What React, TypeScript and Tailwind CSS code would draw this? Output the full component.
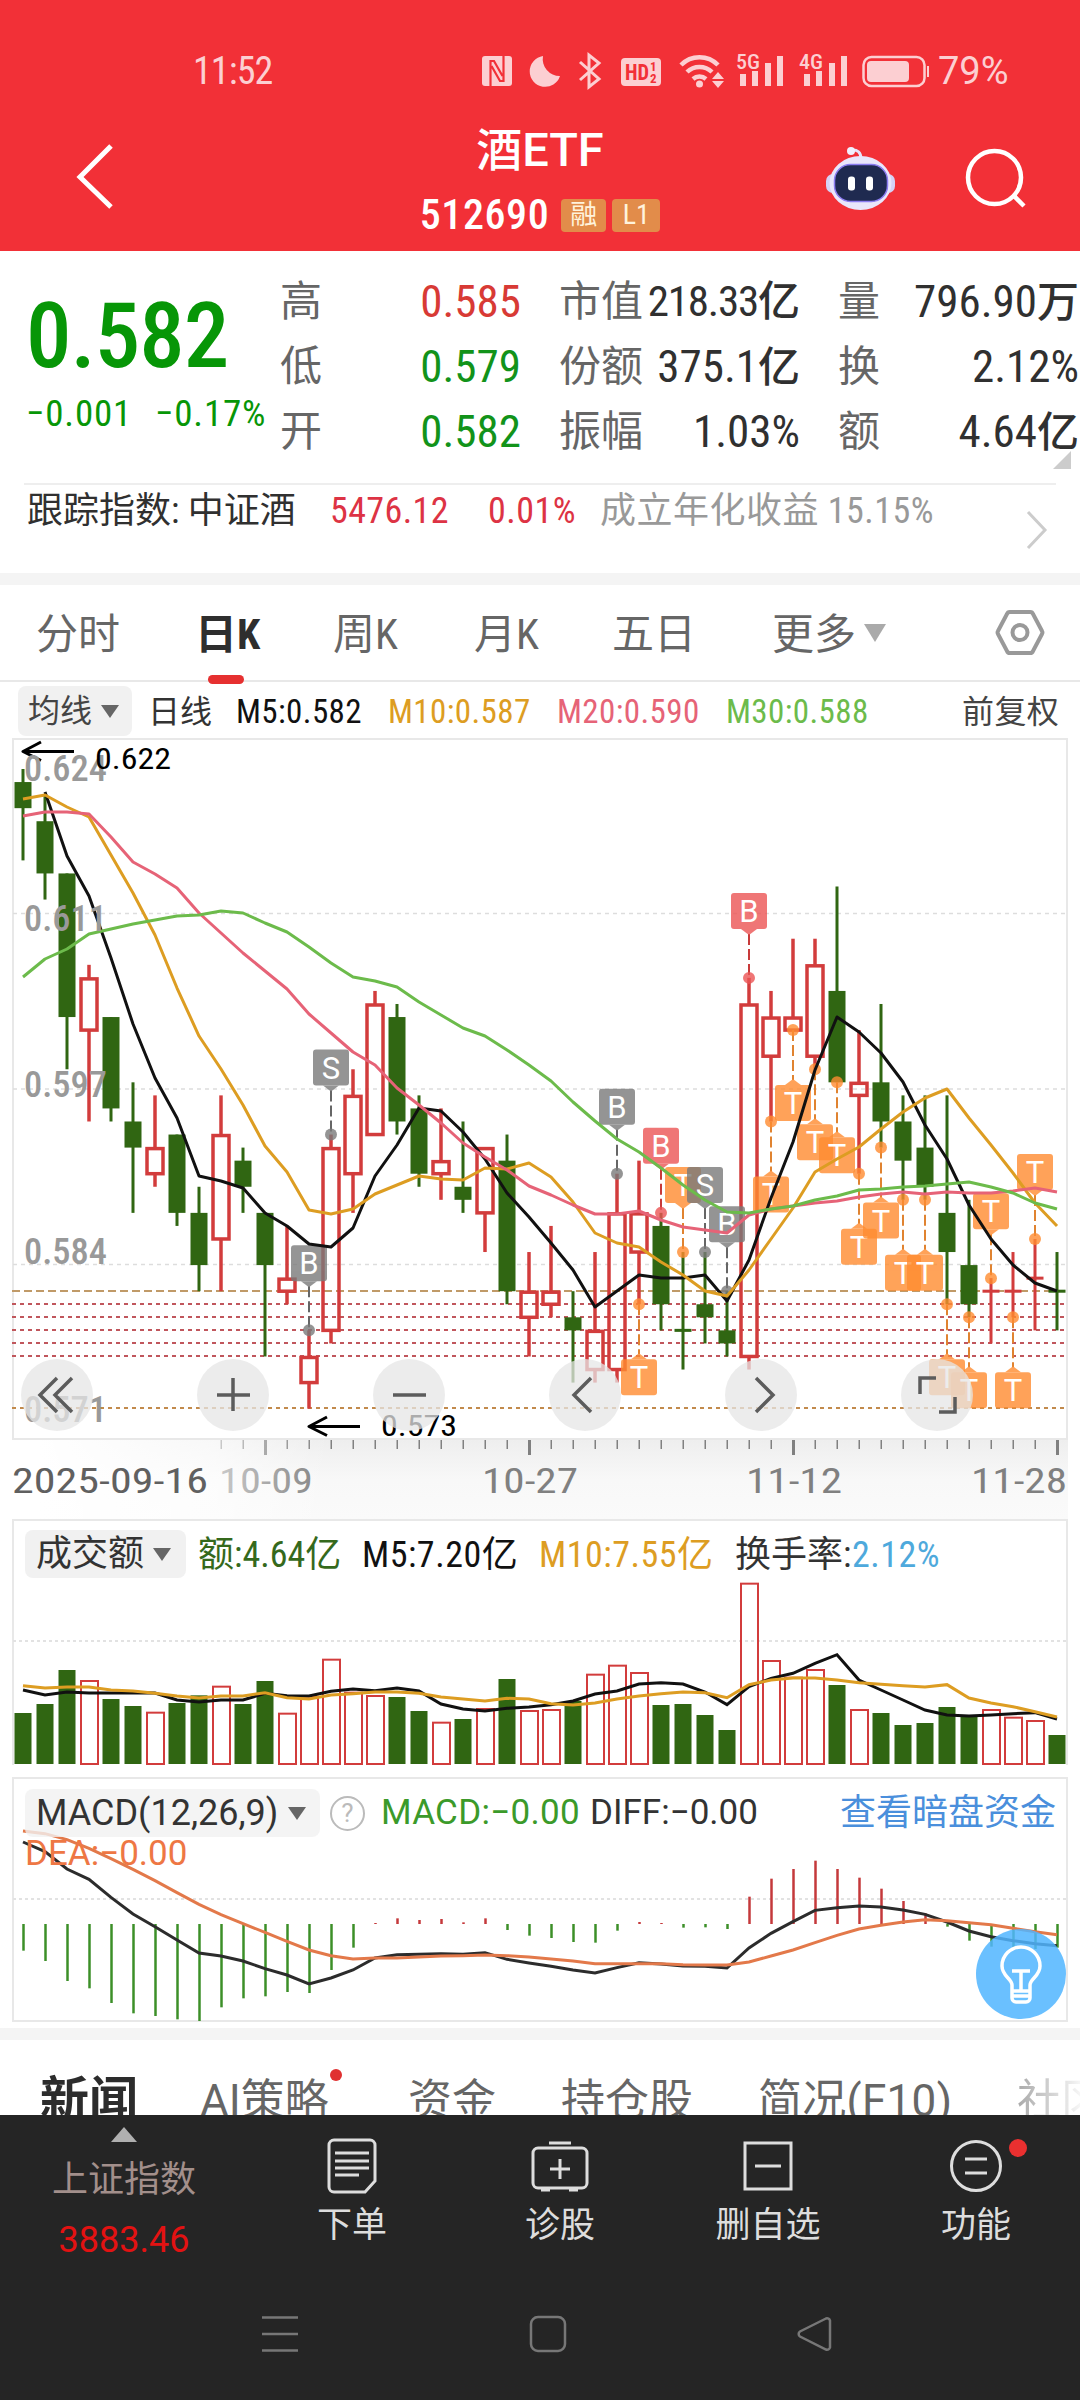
import type { ReactNode } from 'react';

// [kind, high, top, bottom, low] in ticks of 0.001 below 0.622
type Candle = [string, number, number, number, number];

const candles: Candle[] = [
  ['g', 0, 1, 3, 7], ['g', 2, 4, 8, 10], ['g', 8, 8, 19, 23], ['r', 15, 16, 20, 27],
  ['g', 19, 19, 26, 27], ['g', 24, 27, 29, 34], ['r', 25, 29, 31, 32], ['g', 28, 28, 34, 35],
  ['g', 32, 34, 38, 40], ['r', 25, 28, 36, 40], ['g', 29, 30, 32, 34], ['g', 34, 34, 38, 45],
  ['r', 35, 39, 40, 41], ['r', 43, 45, 47, 49], ['r', 28, 29, 43, 44], ['r', 23, 25, 31, 34],
  ['r', 17, 18, 28, 28], ['g', 18, 19, 27, 28], ['g', 25, 26, 31, 32], ['r', 26, 30, 31, 33],
  ['g', 27, 32, 33, 34], ['r', 29, 29, 34, 37], ['g', 28, 30, 40, 41], ['r', 37, 40, 42, 45],
  ['r', 35, 40, 41, 42], ['g', 40, 42, 43, 47], ['r', 37, 43, 46, 47], ['r', 31, 34, 46, 47],
  ['r', 30, 34, 37, 41], ['g', 34, 35, 41, 43], ['g', 37, 43, 43, 46], ['g', 37, 41, 42, 44],
  ['g', 40, 43, 44, 45], ['r', 16, 18, 45, 46], ['r', 17, 19, 22, 27], ['r', 13, 19, 20, 20],
  ['r', 13, 15, 22, 23], ['g', 9, 17, 24, 24], ['r', 20, 24, 25, 31], ['g', 18, 24, 27, 29],
  ['g', 25, 27, 30, 33], ['g', 25, 29, 32, 33], ['g', 25, 34, 37, 41], ['g', 33, 38, 41, 42],
  ['r', 39, 40, 40, 44], ['r', 37, 40, 40, 42], ['r', 36, 39, 39, 43], ['g', 37, 40, 40, 43],
];

const ma5 = [792, 856, 896, 958, 1024, 1078, 1118, 1176, 1181, 1188, 1213, 1226, 1244, 1247, 1228, 1176, 1145, 1108, 1111, 1132, 1159, 1193, 1217, 1243, 1270, 1307, 1291, 1275, 1278, 1278, 1275, 1301, 1260, 1198, 1142, 1070, 1017, 1032, 1053, 1082, 1125, 1159, 1205, 1239, 1265, 1283, 1291];
const ma10 = [799, 795, 807, 817, 855, 893, 935, 988, 1036, 1069, 1105, 1146, 1172, 1210, 1214, 1209, 1194, 1185, 1176, 1179, 1180, 1168, 1169, 1163, 1177, 1202, 1233, 1243, 1247, 1262, 1275, 1291, 1296, 1270, 1239, 1208, 1172, 1159, 1147, 1129, 1112, 1098, 1089, 1118, 1145, 1173, 1203, 1226];
const ma20 = [816, 812, 812, 814, 837, 862, 874, 888, 913, 933, 953, 971, 989, 1014, 1033, 1052, 1065, 1088, 1105, 1123, 1143, 1157, 1170, 1186, 1195, 1205, 1214, 1214, 1211, 1220, 1227, 1230, 1233, 1215, 1209, 1206, 1203, 1201, 1197, 1194, 1192, 1194, 1192, 1193, 1193, 1191, 1188, 1192];
const ma30 = [977, 959, 949, 934, 929, 924, 920, 916, 915, 911, 913, 923, 932, 947, 963, 977, 981, 987, 1002, 1015, 1028, 1036, 1050, 1065, 1081, 1102, 1121, 1139, 1152, 1168, 1185, 1200, 1212, 1213, 1209, 1206, 1200, 1196, 1190, 1189, 1187, 1186, 1184, 1182, 1187, 1193, 1203, 1209];

// [label, colour, candle index, tick, above?]
const markers: [string, string, number, number, boolean][] = [
  ['S', 'gray', 14, 28, true], ['B', 'gray', 13, 43, true], ['B', 'gray', 27, 31, true],
  ['T', 'orange', 28, 41, false], ['B', 'red', 29, 34, true], ['T', 'orange', 30, 37, true],
  ['S', 'gray', 31, 37, true], ['B', 'gray', 32, 40, true], ['B', 'red', 33, 16, true],
  ['T', 'orange', 34, 27, false], ['T', 'orange', 35, 20, false], ['T', 'orange', 36, 23, false],
  ['T', 'orange', 37, 24, false], ['T', 'orange', 38, 31, false], ['T', 'orange', 39, 29, false],
  ['T', 'orange', 40, 33, false], ['T', 'orange', 41, 33, false], ['T', 'orange', 42, 41, false],
  ['T', 'orange', 43, 42, false], ['T', 'orange', 44, 39, true], ['T', 'orange', 45, 42, false],
  ['T', 'orange', 46, 36, true],
];
const markerFill: Record<string, string> = { gray: '#7a7a7a', red: '#ec5454', orange: '#ff8c30' };
const markerLine: Record<string, string> = { gray: '#666', red: '#c83a3a', orange: '#e08330' };

// heights in thirds of a pixel, measured down from each panel's origin
const volume = [609, 582, 480, 510, 567, 588, 605, 579, 556, 527, 582, 513, 608, 557, 446, 545, 555, 561, 603, 635, 627, 594, 507, 600, 597, 573, 491, 464, 486, 585, 582, 615, 660, 218, 450, 500, 477, 525, 597, 609, 645, 639, 591, 621, 597, 620, 630, 675];
const volume5 = [540, 555, 546, 549, 549, 548, 549, 570, 576, 570, 570, 550, 557, 558, 544, 537, 542, 534, 543, 582, 597, 603, 595, 591, 584, 573, 552, 543, 522, 518, 522, 546, 584, 530, 505, 490, 460, 434, 510, 540, 570, 600, 615, 618, 615, 611, 608, 627];
const volume10 = [527, 534, 531, 531, 540, 543, 550, 558, 564, 558, 558, 548, 563, 567, 555, 551, 546, 546, 550, 561, 567, 573, 565, 567, 581, 585, 579, 567, 558, 551, 546, 548, 563, 524, 510, 504, 504, 510, 518, 523, 527, 531, 524, 564, 579, 590, 605, 621];
const macd = [542, 573, 633, 655, 699, 730, 738, 748, 753, 712, 685, 679, 666, 669, 600, 533, 459, 445, 450, 447, 457, 445, 480, 497, 504, 516, 518, 482, 456, 459, 473, 472, 477, 380, 326, 297, 272, 297, 323, 356, 393, 430, 470, 512, 530, 535, 537, 533];
const diff = [216, 245, 297, 328, 382, 432, 470, 510, 549, 558, 573, 596, 615, 642, 624, 600, 564, 554, 553, 551, 553, 548, 568, 579, 589, 600, 609, 593, 578, 582, 588, 589, 594, 534, 490, 455, 421, 413, 408, 411, 420, 433, 456, 483, 500, 512, 521, 527];
const dea = [183, 191, 209, 235, 266, 298, 332, 368, 403, 434, 461, 487, 514, 540, 557, 567, 564, 564, 561, 558, 557, 555, 557, 561, 567, 573, 581, 581, 581, 581, 584, 585, 585, 576, 558, 540, 518, 496, 477, 466, 456, 449, 452, 458, 464, 475, 485, 494];

const RED = '#d23c3c';
const GREEN = '#306612';

const xAt = (i: number) => 23 + 22 * i;
const yAt = (tick: number) => 769 + 13.055 * tick;
const line = (ys: number[], start = 0) => ys.map((y, i) => `${xAt(i + start)},${y}`).join(' ');
const thirds = (ys: number[], origin: number) => ys.map(v => origin + v / 3);

function ChartText({ x, y, w, size, fill, weight = 400, children }: { x: number; y: number; w: number; size: number; fill: string; weight?: number; children: string }) {
  return (
    <text x={x} y={y} fontSize={size} fill={fill} fontWeight={weight} textLength={w} lengthAdjust="spacingAndGlyphs">
      {children}
    </text>
  );
}

function StatusBar() {
  return (
    <div className="flex h-[112px] items-end pb-[20px] pl-[193px] text-[#fccfd2]">
      <span className="w-[289px] text-[38px] leading-[42px] tracking-[-0.9px]">11:52</span>
      <svg width="452" height="42" viewBox="482 50 452 42" fill="#fccfd2">
        <rect x="482" y="56" width="30" height="30" rx="3" />
        <path d="M490.500 86V61h3.500l8.500 15M503.500 56v25h-3.500L491.500 66" fill="none" stroke="#f23037" strokeWidth="2.200" />
        <path d="M543 56a17 17 0 0 0 17 20a15.500 15.500 0 1 1-17-20z" />
        <path d="M580 62l19 17-10 8V55l10 8-19 17" fill="none" stroke="#fccfd2" strokeWidth="3" />
        <rect x="621" y="58" width="40" height="28" rx="4" />
        <g fill="#f23037" fontWeight="700">
          <text x="625" y="80" fontSize="22" textLength="24" lengthAdjust="spacingAndGlyphs">HD</text>
          <text x="650" y="71" fontSize="13">1</text>
          <text x="650" y="83" fontSize="13">2</text>
        </g>
        <g fill="none" stroke="#fccfd2" strokeWidth="4.500">
          <path d="M681 65a26 26 0 0 1 37 0" />
          <path d="M687 72a18 18 0 0 1 25 0" />
          <path d="M693 79a10 10 0 0 1 13 0" />
        </g>
        <circle cx="699.500" cy="84" r="3.500" />
        <path d="M712 79l6-7 6 7zM712 81l6 7 6-7z" />
        <text x="736" y="69" fontSize="21" fontWeight="500" textLength="24" lengthAdjust="spacingAndGlyphs">5G</text>
        <path d="M740 74h6v12h-6zM752 71h6v15h-6zM765 63h6v23h-6zM777 56h6v30h-6z" />
        <text x="799" y="69" fontSize="21" fontWeight="500" textLength="24" lengthAdjust="spacingAndGlyphs">4G</text>
        <path d="M804 74h6v12h-6zM816 71h6v15h-6zM829 63h6v23h-6zM841 56h6v30h-6z" />
        <rect x="863.500" y="57" width="61" height="29" rx="8" fill="none" stroke="#fccfd2" strokeWidth="2.500" />
        <rect x="867" y="61" width="42" height="21" rx="4" />
        <path d="M927 66h2v11h-2z" />
      </svg>
      <span className="ml-[4px] text-[38px] leading-[42px] [font-stretch:100%]">79%</span>
    </div>
  );
}

function TitleBar() {
  return (
    <div className="flex h-[139px] text-white">
      <div className="w-[300px] pt-[31px] pl-[74px]">
        <svg width="42" height="68" viewBox="74 143 42 68" fill="none" stroke="#fff" strokeWidth="5">
          <path d="M111 146L80 177l31 30" />
        </svg>
      </div>
      <div className="flex w-[480px] flex-col items-center">
        <div className="mt-[10px] text-[46px] leading-[56px] font-medium">酒<span className="text-[47px] [font-stretch:100%]">ETF</span></div>
        <div className="mt-[15px] flex items-center gap-[6px]">
          <span className="mr-[6px] text-[42px] leading-[44px] font-medium tracking-[0.6px]">512690</span>
          <span className="flex h-[33px] w-[45px] items-center justify-center rounded bg-[#e28c4a] text-[27px] text-[#fff3dc]">融</span>
          <span className="flex h-[33px] w-[48px] items-center justify-center rounded bg-[#e28c4a] text-[28px] text-[#fff3dc]">L1</span>
        </div>
      </div>
      <div className="flex pt-[32px] pl-[44px]">
        <svg width="74" height="70" viewBox="824 144 74 70">
          <path d="M851 150q10-1 10 9" fill="none" stroke="#e6e4fb" strokeWidth="3" />
          <circle cx="851" cy="151" r="4" fill="#f1effd" />
          <rect x="826" y="174" width="69" height="19" rx="7" fill="#d5d2f6" />
          <ellipse cx="860.500" cy="183" rx="31" ry="27" fill="#e9e6fb" />
          <rect x="834.500" y="164.500" width="53" height="37" rx="16" fill="#1f2a50" stroke="#8b7cf0" strokeWidth="1.500" />
          <rect x="848" y="176.500" width="7" height="14" rx="3" fill="#fff" />
          <rect x="866" y="176.500" width="7" height="14" rx="3" fill="#fff" />
        </svg>
        <svg className="ml-[66px]" width="68" height="70" viewBox="964 144 68 70" fill="none" stroke="#fff" strokeWidth="4.500">
          <circle cx="994.500" cy="177.500" r="26.500" />
          <path d="M1013 195l11 11" />
        </svg>
      </div>
    </div>
  );
}

function Stat({ label, value, unit, className = '' }: { label: string; value: string; unit?: string; className?: string }) {
  return (
    <div className="flex h-[65px] items-center justify-between whitespace-nowrap">
      <span className="text-[42px] text-[#666]">{label}</span>
      <span className={`text-[45px] font-[450] ${className}`}>
        {value}
        {unit && <span className="text-[42px] tracking-normal">{unit}</span>}
      </span>
    </div>
  );
}

function Quote() {
  return (
    <section className="h-[322px]">
      <div className="flex h-[232px] pt-[18px] text-[#303030]">
        <div className="w-[280px] shrink-0 pl-[26px] text-[#079607]">
          <div className="mt-[17px] text-[91px] leading-[100px] font-medium tracking-[-1px]">0.582</div>
          <div className="mt-[8px] flex text-[37px] leading-[40px] tracking-[0.8px]">
            <span className="w-[129px]">−0.001</span>
            <span>−0.17%</span>
          </div>
        </div>
        <div className="w-[241px] shrink-0">
          <Stat label="高" value="0.585" className="text-[#d83a35]" />
          <Stat label="低" value="0.579" className="text-[#12931a]" />
          <Stat label="开" value="0.582" className="text-[#12931a]" />
        </div>
        <div className="ml-[38px] w-[241px] shrink-0">
          <Stat label="市值" value="218.33" unit="亿" className="text-[43px]! tracking-[-1.2px]" />
          <Stat label="份额" value="375.1" unit="亿" />
          <Stat label="振幅" value="1.03%" />
        </div>
        <div className="relative ml-[38px] w-[241px] shrink-0">
          <Stat label="量" value="796.90" unit="万" />
          <Stat label="换" value="2.12%" />
          <Stat label="额" value="4.64" unit="亿" />
          <svg className="absolute top-[182px] right-[8px]" width="18" height="18"><path d="M18 0v18H0z" fill="#ccc" /></svg>
        </div>
      </div>
      <div className="mx-[24px] flex h-[90px] border-t-2 border-[#eee] pl-[3px] text-[36px] leading-[52px] whitespace-nowrap">
        <span className="w-[303px] shrink-0 text-[#303030]">跟踪指数: 中证酒</span>
        <span className="w-[158px] shrink-0 font-[450] tracking-[0.4px] text-[#dd3344]">5476.12</span>
        <span className="w-[112px] shrink-0 font-[450] tracking-[0.5px] text-[#dd3344]">0.01%</span>
        <span className="w-[425px] shrink-0 tracking-[0.5px] text-[#999]">成立年化收益 15.15%</span>
        <svg className="mt-[25px]" width="24" height="40" fill="none" stroke="#ccc" strokeWidth="3"><path d="M3 2l17 18L3 38" /></svg>
      </div>
    </section>
  );
}

function PeriodTabs() {
  return (
    <nav className="flex h-[97px] items-start border-b-2 border-[#e8e8e8] pt-[19px] pl-[36px] text-[42px] leading-[62px] text-[#666]">
      <span className="w-[159px]">分时</span>
      <span className="relative w-[138px] font-bold text-[#2e2e2e]">
        日K
        <i className="absolute top-[71px] left-[13px] h-[9px] w-[36px] rounded-full bg-[#e63030]" />
      </span>
      <span className="w-[141px]">周K</span>
      <span className="w-[138px]">月K</span>
      <span className="w-[160px]">五日</span>
      <span className="w-[92px]">更多</span>
      <svg className="mt-[20px]" width="22" height="18"><path d="M0 0h22L11 18z" fill="#aaa" /></svg>
      <svg className="mt-[4px] ml-[109px]" width="50" height="50" viewBox="995 608 50 50" fill="none" stroke="#999" strokeWidth="4">
        <path d="M1010 612h20a3 3 0 0 1 3 2l9 17a3 3 0 0 1 0 3l-9 17a3 3 0 0 1-3 2h-20a3 3 0 0 1-3-2l-9-17a3 3 0 0 1 0-3l9-17a3 3 0 0 1 3-2z" />
        <circle cx="1020" cy="632.500" r="7.500" />
      </svg>
    </nav>
  );
}

function Caret() {
  return <svg width="18" height="13"><path d="M0 0h18L9 13z" fill="#666" /></svg>;
}

function AverageRow() {
  return (
    <div className="flex h-[56px] items-start pt-[4px] pl-[18px] text-[33px] leading-[52px] tracking-[0.4px]">
      <span className="flex h-[50px] w-[114px] items-center gap-[9px] rounded-lg bg-[#f1f1f1] pl-[10px] text-[32px] tracking-normal text-[#444]">均线<Caret /></span>
      <span className="ml-[16px] w-[88px] text-[32px] tracking-normal text-[#333]">日线</span>
      <span className="w-[152px] font-[450] text-[#111]">M5:0.582</span>
      <span className="w-[169px] font-[450] text-[#dd9d22]">M10:0.587</span>
      <span className="w-[169px] font-[450] text-[#e66377]">M20:0.590</span>
      <span className="w-[236px] font-[450] text-[#6cbb4b]">M30:0.588</span>
      <span className="text-[32px] text-[#444]">前复权</span>
    </div>
  );
}

function Marker({ data }: { data: [string, string, number, number, boolean] }) {
  const [label, tone, index, tick, above] = data;
  const x = xAt(index);
  const y = yAt(tick);
  const top = above ? y - 85 : y + 55;
  const tip = above ? `M${x - 8} ${y - 49}h16l-8 6z` : `M${x - 8} ${y + 55}h16l-8-6z`;
  return (
    <g>
      <line x1={x} x2={x} y1={above ? y - 44 : y} y2={above ? y : y + 50} stroke={markerLine[tone]} strokeWidth="2" strokeDasharray="11 4" />
      <g fill={markerFill[tone]} opacity="0.8">
        <circle cx={x} cy={y} r="6" />
        <rect x={x - 18} y={top} width="36" height="36" rx="3" />
        <path d={tip} />
      </g>
      <text x={x} y={top + 29} fontSize="31" fill="#fff" textAnchor="middle" className="[font-stretch:100%]">{label}</text>
    </g>
  );
}

function CandleChart() {
  return (
    <svg className="block" width="1080" height="702" viewBox="0 738 1080 702">
      <rect x="13" y="739" width="1054" height="700" fill="none" stroke="#e8e8e8" strokeWidth="2" />
      {[913.5, 1089, 1264.5].map(y => (
        <line key={y} x1="13" x2="1067" y1={y} y2={y} stroke="#ddd" strokeWidth="1.500" strokeDasharray="4 4" />
      ))}
      <line x1="12" x2="1066" y1="1291" y2="1291" stroke="#c09a68" strokeWidth="2" strokeDasharray="8 4" />
      {[1304, 1317, 1330, 1343, 1356].map(y => (
        <line key={y} x1="12" x2="1066" y1={y} y2={y} stroke="#c0565c" strokeWidth="2" strokeDasharray="4 4" />
      ))}
      <line x1="12" x2="1066" y1="1408" y2="1408" stroke="#c28a4c" strokeWidth="2" strokeDasharray="4 4" />

      {candles.map(([kind, high, top, bottom, low], i) => {
        const x = xAt(i);
        if (kind === 'g' || top === bottom) {
          const color = kind === 'g' ? GREEN : RED;
          return (
            <g key={i} fill={color}>
              <rect x={x - 1.5} y={yAt(high)} width="3" height={yAt(low) - yAt(high)} />
              <rect x={x - 8.5} y={yAt(top) - (top === bottom ? 1.5 : 0)} width="17" height={Math.max(3, yAt(bottom) - yAt(top))} />
            </g>
          );
        }
        return (
          <g key={i} fill="none" stroke={RED} strokeWidth="3.500">
            <line x1={x} x2={x} y1={yAt(high)} y2={yAt(top)} />
            <line x1={x} x2={x} y1={yAt(bottom)} y2={yAt(low)} />
            <rect x={x - 8} y={yAt(top) + 1} width="16" height={yAt(bottom) - yAt(top) - 1} />
          </g>
        );
      })}

      {markers.map((m, i) => <Marker key={i} data={m} />)}

      <g fill="none" strokeWidth="3" strokeLinejoin="round">
        <polyline points={line(ma5, 1)} stroke="#111" />
        <polyline points={line(ma10)} stroke="#dd9d22" />
        <polyline points={line(ma20)} stroke="#e66377" />
        <polyline points={line(ma30)} stroke="#6cbb4b" />
        <path d="M74 751.500H23M41 742l-18 9.500 18 9M360 1426.500h-51M327 1417l-18 9.500 18 9" stroke="#000" />
      </g>

      <ChartText x={24} y={781} w={83} size={36} fill="#999" weight={500}>0.624</ChartText>
      <ChartText x={24} y={931} w={83} size={36} fill="#999" weight={500}>0.611</ChartText>
      <ChartText x={24} y={1097} w={83} size={36} fill="#999" weight={500}>0.597</ChartText>
      <ChartText x={24} y={1264} w={83} size={36} fill="#999" weight={500}>0.584</ChartText>
      <ChartText x={24} y={1422} w={83} size={36} fill="#999" weight={500}>0.571</ChartText>
      <ChartText x={95} y={769} w={76} size={30} fill="#000">0.622</ChartText>
      <ChartText x={381} y={1436} w={76} size={30} fill="#000">0.573</ChartText>
    </svg>
  );
}

function ChartButton({ children }: { children: ReactNode }) {
  return (
    <button className="h-[72px] w-[72px] rounded-full bg-[#e6e6e6]/75">
      <svg width="72" height="72" viewBox="-36 -36 72 72" fill="none" stroke="#5c5c5c" strokeWidth="3.500">{children}</svg>
    </button>
  );
}

function ChartButtons() {
  return (
    <div className="absolute top-[621px] left-[21px] flex gap-[104px]">
      <ChartButton><path d="M0-17l-17 17L0 17M15-17L-2 0l17 17" /></ChartButton>
      <ChartButton><path d="M-16 0h33M0-17v33" /></ChartButton>
      <ChartButton><path d="M-16 0h33" /></ChartButton>
      <ChartButton><path d="M6-17l-17 17L6 17" /></ChartButton>
      <ChartButton><path d="M-5-17l17 17-17 17" /></ChartButton>
      <ChartButton><path d="M-17-1v-16H-1M2 17h16V2" /></ChartButton>
    </div>
  );
}

function DateAxis() {
  return (
    <svg className="block" width="1080" height="79" viewBox="0 1440 1080 79" fill="#808080">
      <defs>
        <linearGradient id="axis" x1="0" y1="0" x2="0" y2="1">
          <stop offset="0" stopColor="#eeeeee" />
          <stop offset="0.500" stopColor="#f8f8f8" />
          <stop offset="1" stopColor="#fafafa" />
        </linearGradient>
        <linearGradient id="fade" x1="0" y1="0" x2="1" y2="0">
          <stop offset="0.120" stopColor="#fff" />
          <stop offset="0.650" stopColor="#fff" stopOpacity="0.600" />
          <stop offset="1" stopColor="#fff" stopOpacity="0" />
        </linearGradient>
      </defs>
      <rect x="12" y="1440" width="1056" height="79" fill="url(#axis)" />
      {candles.map((_, i) => i < 9 ? null : i % 12 === 11
        ? <rect key={i} x={xAt(i) - 1} y="1440" width="3" height="15" />
        : <rect key={i} x={xAt(i) - 0.5} y="1440" width="1.500" height="9" />)}
      <ChartText x={219} y={1493} w={94} size={35} fill="#808080">10-09</ChartText>
      <ChartText x={482} y={1493} w={96} size={35} fill="#808080">10-27</ChartText>
      <ChartText x={746} y={1493} w={96} size={35} fill="#808080">11-12</ChartText>
      <ChartText x={971} y={1493} w={96} size={35} fill="#808080">11-28</ChartText>
      <rect x="0" y="1440" width="330" height="79" fill="url(#fade)" />
      <ChartText x={12} y={1493} w={196} size={35} fill="#606060">2025-09-16</ChartText>
    </svg>
  );
}

function VolumePanel() {
  return (
    <section className="relative h-[258px]">
      <svg className="block" width="1080" height="258" viewBox="0 1519 1080 258" fill="none">
        <path d="M13 1765v-245h1054v245" stroke="#e8e8e8" strokeWidth="2" />
        <line x1="13" x2="1067" y1="1641" y2="1641" stroke="#e2e2e2" strokeWidth="2" strokeDasharray="3 3" />
        {volume.map((v, i) => {
          const y = 1510 + v / 3;
          return candles[i][0] === 'g'
            ? <rect key={i} x={xAt(i) - 8.5} y={y} width="17" height={1764 - y} fill={GREEN} />
            : <rect key={i} x={xAt(i) - 8} y={y + 1} width="17" height={1763 - y} stroke={RED} strokeWidth="2" />;
        })}
        <polyline points={line(thirds(volume5, 1510))} stroke="#111" strokeWidth="3" />
        <polyline points={line(thirds(volume10, 1510))} stroke="#dd9d22" strokeWidth="3" />
      </svg>
      <div className="absolute top-[11px] left-[25px] flex text-[36px] leading-[50px] tracking-[0.5px] whitespace-nowrap">
        <span className="flex h-[48px] w-[161px] items-center gap-[9px] rounded-lg bg-[#f1f1f1] pl-[11px] tracking-normal text-[#333]">成交额<Caret /></span>
        <span className="ml-[12px] w-[164px] tracking-normal text-[#35691c]">额:4.64亿</span>
        <span className="w-[177px] text-[#111]">M5:7.20亿</span>
        <span className="w-[196px] text-[#dd9d22]">M10:7.55亿</span>
        <span className="w-[117px] tracking-normal text-[#333]">换手率:</span>
        <span className="text-[#4ea9dc]">2.12%</span>
      </div>
    </section>
  );
}

function MacdPanel() {
  return (
    <section className="relative h-[251px]">
      <svg className="block" width="1080" height="251" viewBox="0 1777 1080 251" fill="none">
        <rect x="13" y="1778" width="1054" height="243" stroke="#e8e8e8" strokeWidth="2" />
        <line x1="13" x2="1067" y1="1899" y2="1899" stroke="#e2e2e2" strokeWidth="2" strokeDasharray="3 3" />
        {macd.map((v, i) => (
          <line key={i} x1={xAt(i) + 0.5} x2={xAt(i) + 0.5} y1="1924" y2={1770 + v / 3} stroke={v > 463 ? '#3c8f28' : '#c4393b'} strokeWidth="2.500" />
        ))}
        <polyline points={line(thirds(diff, 1770))} stroke="#2c2c2c" strokeWidth="3" />
        <polyline points={line(thirds(dea, 1770))} stroke="#e3794a" strokeWidth="3" />
      </svg>
      <div className="absolute top-[11px] left-[25px] w-[1043px] text-[35px] whitespace-nowrap [font-stretch:100%]">
        <div className="flex items-center leading-[50px]">
          <span className="flex h-[48px] w-[295px] items-center gap-[11px] rounded-lg bg-[#f1f1f1]/80 pl-[11px] text-[#333]">
            <span className="w-[241px] text-[36px]">MACD(12,26,9)</span><Caret />
          </span>
          <span className="ml-[10px] h-[35px] w-[35px] rounded-full border-2 border-[#bbb] text-center text-[26px] leading-[31px] text-[#bbb]">?</span>
          <span className="ml-[16px] w-[209px] tracking-[0.3px] text-[#3b9a2a]">MACD:−0.00</span>
          <span className="w-[250px] text-[#333]">DIFF:−0.00</span>
          <span className="text-[36px] text-[#4a8fdc]">查看暗盘资金</span>
        </div>
        <div className="mt-[-6px] leading-[44px] text-[#ee7744]">DEA:−0.00</div>
      </div>
      <svg className="absolute top-[152px] left-[976px]" width="90" height="90" viewBox="-45 -45 90 90" fill="none" stroke="#fff" strokeWidth="3.500">
        <circle r="45" fill="#50b5ff" fillOpacity="0.850" stroke="none" />
        <path d="M-9 17V11C-9 5-19 2-19-8a19 19 0 0 1 38 0C19 2 9 5 9 11v6zM-9 17v7a4 4 0 0 0 4 4H5a4 4 0 0 0 4-4v-7M-9 22H9M0 16V-3M-9-3H9" />
      </svg>
    </section>
  );
}

function NewsTabs() {
  return (
    <nav className="flex h-[75px] overflow-hidden pt-[29px] pl-[40px] text-[44px] leading-[64px] whitespace-nowrap text-[#666]">
      <span className="w-[160px] shrink-0 text-[49px] font-bold text-[#2c2c2c]">新闻</span>
      <span className="relative w-[208px] shrink-0 [font-stretch:100%]">
        AI策略
        <i className="absolute top-0 left-[130px] h-[12px] w-[12px] rounded-full bg-[#e03030]" />
      </span>
      <span className="w-[153px] shrink-0">资金</span>
      <span className="w-[197px] shrink-0">持仓股</span>
      <span className="w-[259px] shrink-0 tracking-[0.3px] [font-stretch:100%]">简况(F10)</span>
      <span className="shrink-0 bg-linear-to-r from-[#aaa] to-white to-80% bg-clip-text text-transparent">社区</span>
    </nav>
  );
}

function BottomItem({ label, className, children }: { label: string; className: string; children: ReactNode }) {
  return (
    <div className={`flex flex-col items-center ${className}`}>
      <svg className="mt-[19px]" width="64" height="64" viewBox="-32 -32 64 64" fill="none" stroke="#ddd" strokeWidth="3">{children}</svg>
      <span className="mt-[2px] text-[35px] leading-[52px] text-[#ddd]">{label}</span>
    </div>
  );
}

function BottomBar() {
  return (
    <footer className="h-[285px] bg-[#252525]">
      <div className="flex h-[180px]">
        <div className="flex w-[248px] flex-col items-center">
          <svg className="mt-[12px]" width="26" height="15"><path d="M13 0l13 15H0z" fill="#b0b0b0" /></svg>
          <span className="mt-[13px] text-[36px] leading-[50px] text-[#a28f8b]">上证指数</span>
          <span className="mt-[12px] text-[36px] leading-[46px] text-[#e31212] [font-stretch:100%]">3883.46</span>
        </div>
        <BottomItem label="下单" className="w-[208px]">
          <path d="M-18-26h36a5 5 0 0 1 5 5V15L13 26h-31a5 5 0 0 1-5-5v-42a5 5 0 0 1 5-5zM-17-13h34M-17-5h34M-17 2h34M-17 9H7" />
        </BottomItem>
        <BottomItem label="诊股" className="w-[208px]">
          <path d="M-22-18h44a5 5 0 0 1 5 5V17a5 5 0 0 1-5 5h-44a5 5 0 0 1-5-5v-30a5 5 0 0 1 5-5zM-11-23h22M-10 3h20M0-7V13M-19 24h9M9 24h9" />
        </BottomItem>
        <BottomItem label="删自选" className="w-[208px]">
          <path d="M-23-23h46v46h-46zM-13 0h26" />
        </BottomItem>
        <div className="relative w-[208px]">
          <BottomItem label="功能" className="w-full">
            <circle r="24.500" />
            <path d="M-11-7h22M-11 7h22" />
          </BottomItem>
          <i className="absolute top-[24px] left-[137px] h-[18px] w-[18px] rounded-full bg-[#ea3030]" />
        </div>
      </div>
      <svg className="mt-[14px] ml-[240px]" width="600" height="48" viewBox="240 2309 600 48" fill="none" stroke="#777" strokeWidth="2.500">
        <path d="M262 2317.500h36M262 2334h36M262 2350.500h36" />
        <rect x="531" y="2317" width="34" height="34" rx="7" />
        <path d="M826 2318.500l-26 13a3 3 0 0 0 0 5l26 13a3 3 0 0 0 4-2v-27a3 3 0 0 0-4-2z" />
      </svg>
    </footer>
  );
}

export default function App() {
  return (
    <div className="h-[2400px] w-[1080px] overflow-hidden bg-white font-['Roboto','Noto_Sans_CJK_SC',sans-serif] [font-stretch:86%]">
      <header className="bg-[#f23037]">
        <StatusBar />
        <TitleBar />
      </header>
      <Quote />
      <div className="h-[12px] bg-[#f4f4f4]" />
      <PeriodTabs />
      <AverageRow />
      <section className="relative">
        <CandleChart />
        <ChartButtons />
      </section>
      <DateAxis />
      <VolumePanel />
      <MacdPanel />
      <div className="h-[12px] bg-[#f4f4f4]" />
      <NewsTabs />
      <BottomBar />
    </div>
  );
}
